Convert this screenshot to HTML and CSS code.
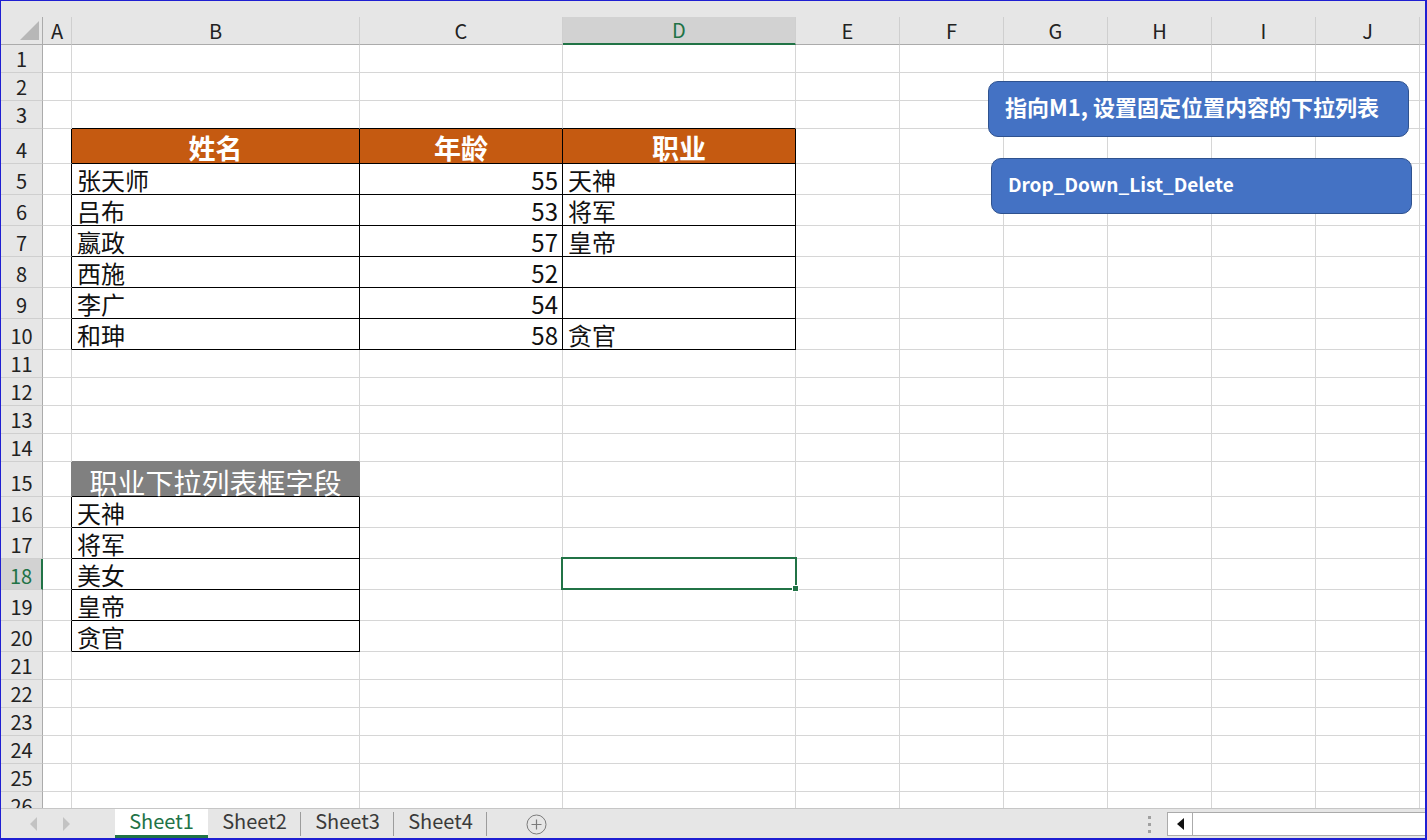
FILE: index.html
```html
<!DOCTYPE html>
<html lang="zh-CN">
<head>
<meta charset="utf-8">
<title>Sheet1</title>
<link rel="stylesheet" href="styles.css">
</head>
<body>
<div class="window">
  <div class="topband"></div>
  <div class="sheet">
    <div class="row hdr h28">
      <div class="corner"><svg width="19" height="19" viewBox="0 0 19 19"><polygon points="19,0 19,19 0,19" fill="#b7b7b7"/></svg></div>
      <div>A</div><div>B</div><div>C</div><div class="csel">D</div><div>E</div><div>F</div><div>G</div><div>H</div><div>I</div><div>J</div><div></div>
    </div>
    <div class="row h28"><div class="rh">1</div><div></div><div></div><div></div><div></div><div></div><div></div><div></div><div></div><div></div><div></div><div></div></div>
    <div class="row h28"><div class="rh">2</div><div></div><div></div><div></div><div></div><div></div><div></div><div></div><div></div><div></div><div></div><div></div></div>
    <div class="row h28"><div class="rh">3</div><div></div><div class="bb"></div><div class="bb"></div><div class="bb"></div><div></div><div></div><div></div><div></div><div></div><div></div><div></div></div>
    <div class="row h35"><div class="rh">4</div><div class="br"></div><div class="t oh">姓名</div><div class="t oh">年龄</div><div class="t oh">职业</div><div></div><div></div><div></div><div></div><div></div><div></div><div></div></div>
    <div class="row h31"><div class="rh">5</div><div class="br"></div><div class="t tx">张天师</div><div class="t tx num">55</div><div class="t tx">天神</div><div></div><div></div><div></div><div></div><div></div><div></div><div></div></div>
    <div class="row h31"><div class="rh">6</div><div class="br"></div><div class="t tx">吕布</div><div class="t tx num">53</div><div class="t tx">将军</div><div></div><div></div><div></div><div></div><div></div><div></div><div></div></div>
    <div class="row h31"><div class="rh">7</div><div class="br"></div><div class="t tx">嬴政</div><div class="t tx num">57</div><div class="t tx">皇帝</div><div></div><div></div><div></div><div></div><div></div><div></div><div></div></div>
    <div class="row h31"><div class="rh">8</div><div class="br"></div><div class="t tx">西施</div><div class="t tx num">52</div><div class="t tx"></div><div></div><div></div><div></div><div></div><div></div><div></div><div></div></div>
    <div class="row h31"><div class="rh">9</div><div class="br"></div><div class="t tx">李广</div><div class="t tx num">54</div><div class="t tx"></div><div></div><div></div><div></div><div></div><div></div><div></div><div></div></div>
    <div class="row h31"><div class="rh">10</div><div class="br"></div><div class="t tx">和珅</div><div class="t tx num">58</div><div class="t tx">贪官</div><div></div><div></div><div></div><div></div><div></div><div></div><div></div></div>
    <div class="row h28"><div class="rh">11</div><div></div><div></div><div></div><div></div><div></div><div></div><div></div><div></div><div></div><div></div><div></div></div>
    <div class="row h28"><div class="rh">12</div><div></div><div></div><div></div><div></div><div></div><div></div><div></div><div></div><div></div><div></div><div></div></div>
    <div class="row h28"><div class="rh">13</div><div></div><div></div><div></div><div></div><div></div><div></div><div></div><div></div><div></div><div></div><div></div></div>
    <div class="row h28"><div class="rh">14</div><div></div><div class="bbg"></div><div></div><div></div><div></div><div></div><div></div><div></div><div></div><div></div><div></div></div>
    <div class="row h35"><div class="rh">15</div><div class="brg"></div><div class="gh">职业下拉列表框字段</div><div></div><div></div><div></div><div></div><div></div><div></div><div></div><div></div><div></div></div>
    <div class="row h31"><div class="rh">16</div><div class="br"></div><div class="t tx">天神</div><div></div><div></div><div></div><div></div><div></div><div></div><div></div><div></div><div></div></div>
    <div class="row h31"><div class="rh">17</div><div class="br"></div><div class="t tx">将军</div><div></div><div></div><div></div><div></div><div></div><div></div><div></div><div></div><div></div></div>
    <div class="row h31"><div class="rh rsel">18</div><div class="br"></div><div class="t tx">美女</div><div></div><div></div><div></div><div></div><div></div><div></div><div></div><div></div><div></div></div>
    <div class="row h31"><div class="rh">19</div><div class="br"></div><div class="t tx">皇帝</div><div></div><div></div><div></div><div></div><div></div><div></div><div></div><div></div><div></div></div>
    <div class="row h31"><div class="rh">20</div><div class="br"></div><div class="t tx">贪官</div><div></div><div></div><div></div><div></div><div></div><div></div><div></div><div></div><div></div></div>
    <div class="row h28"><div class="rh">21</div><div></div><div></div><div></div><div></div><div></div><div></div><div></div><div></div><div></div><div></div><div></div></div>
    <div class="row h28"><div class="rh">22</div><div></div><div></div><div></div><div></div><div></div><div></div><div></div><div></div><div></div><div></div><div></div></div>
    <div class="row h28"><div class="rh">23</div><div></div><div></div><div></div><div></div><div></div><div></div><div></div><div></div><div></div><div></div><div></div></div>
    <div class="row h28"><div class="rh">24</div><div></div><div></div><div></div><div></div><div></div><div></div><div></div><div></div><div></div><div></div><div></div></div>
    <div class="row h28"><div class="rh">25</div><div></div><div></div><div></div><div></div><div></div><div></div><div></div><div></div><div></div><div></div><div></div></div>
    <div class="row h28"><div class="rh">26</div><div></div><div></div><div></div><div></div><div></div><div></div><div></div><div></div><div></div><div></div><div></div></div>

    <div class="selection"><span class="handle"></span></div>
    <div class="shape btn1">指向M1, 设置固定位置内容的下拉列表</div>
    <div class="shape btn2">Drop_Down_List_Delete</div>
  </div>
  <div class="tabbar">
    <div class="nav">
      <svg width="7" height="14" viewBox="0 0 7 14"><polygon points="7,0 7,14 0,7" fill="#c3c3c3"/></svg>
      <svg width="7" height="14" viewBox="0 0 7 14"><polygon points="0,0 0,14 7,7" fill="#c3c3c3"/></svg>
    </div>
    <div class="tab active">Sheet1</div>
    <div class="tab">Sheet2</div>
    <div class="tab">Sheet3</div>
    <div class="tab">Sheet4</div>
    <div class="addsheet"><svg width="21" height="21" viewBox="0 0 21 21"><circle cx="10.5" cy="10.5" r="9.5" fill="none" stroke="#7b7b7b" stroke-width="1"/><path d="M10.5 5.5v10M5.5 10.5h10" stroke="#7b7b7b" stroke-width="1.2"/></svg></div>
    <div class="rightgroup">
      <div class="splitter"><span></span><span></span><span></span></div>
      <div class="hscroll">
        <div class="arrowbtn"><svg width="7" height="12" viewBox="0 0 7 12"><polygon points="7,0 7,12 0,6" fill="#111"/></svg></div>
        <div class="track"></div>
      </div>
    </div>
  </div>
</div>
</body>
</html>
```
FILE: styles.css
```css
* { box-sizing: border-box; }
html, body { margin: 0; padding: 0; }
body {
  width: 1427px;
  height: 840px;
  overflow: hidden;
  background: #fff;
  font-family: "Noto Sans CJK SC", "Noto Sans", sans-serif;
  color: #111;
}
.window {
  width: 1427px;
  height: 840px;
  border-style: solid;
  border-color: #1f1fd2;
  border-width: 1px 2px 2px 1px;
  display: flex;
  flex-direction: column;
  overflow: hidden;
}
.topband { height: 16px; flex: none; background: #e6e6e6; }

.sheet {
  position: relative;
  flex: 1;
  min-height: 0;
  overflow: hidden;
  display: flex;
  flex-direction: column;
}
.row {
  flex: none;
  display: grid;
  grid-template-columns: 42px 29px 288px 203px 233px repeat(6, 104px) 1fr;
}
.h28 { height: 28px; }
.h31 { height: 31px; }
.h35 { height: 35px; }

.row > div {
  border-right: 1px solid #d6d6d6;
  border-bottom: 1px solid #d6d6d6;
  display: flex;
  align-items: flex-end;
  min-width: 0;
  white-space: nowrap;
}
.row > div:last-child { border-right: none; }

/* column headers */
.row.hdr > div {
  background: #e6e6e6;
  justify-content: center;
  font-size: 20px;
  line-height: 20px;
  padding-bottom: 3px;
  color: #222;
  border-bottom-color: #ababab;
  border-right-color: #cfcfcf;
}
.row.hdr > .corner {
  justify-content: flex-end;
  padding: 0 3px 4px 0;
  border-right-color: #ababab;
}
.row.hdr > .csel {
  background: #d2d2d2;
  color: #217346;
  border-bottom: 2px solid #217346;
}

/* row headers */
.row > .rh {
  background: #e6e6e6;
  justify-content: center;
  font-size: 20px;
  line-height: 20px;
  padding-bottom: 3px;
  color: #222;
  border-right-color: #ababab;
  border-bottom-color: #cfcfcf;
}
.row > .rsel {
  background: #d2d2d2;
  color: #217346;
  border-right: 2px solid #217346;
}

/* table borders */
.row > .bb { border-bottom-color: #000; }
.row > .br { border-right-color: #000; }
.row > .t { border-right-color: #000; border-bottom-color: #000; }
.row > .bbg { border-bottom-color: #808080; }
.row > .brg { border-right-color: #808080; }

.row > .tx {
  font-size: 24px;
  line-height: 24px;
  padding: 0 4px 2px 5px;
}
.row > .num { justify-content: flex-end; }

.row > .oh {
  background: #c55a11;
  color: #fff;
  font-weight: bold;
  font-size: 27px;
  line-height: 27px;
  justify-content: center;
  padding-bottom: 2px;
}
.row > .gh {
  background: #808080;
  border-right-color: #808080;
  border-bottom-color: #000;
  color: #fff;
  font-size: 28px;
  line-height: 28px;
  justify-content: center;
  padding-bottom: 0;
}

/* overlays */
.selection {
  position: absolute;
  left: 560px;
  top: 540px;
  width: 236px;
  height: 33px;
  border: 2px solid #217346;
}
.handle {
  position: absolute;
  left: 229px;
  top: 26px;
  width: 7px;
  height: 7px;
  background: #217346;
  border: 1px solid #fff;
}
.shape {
  position: absolute;
  width: 421px;
  height: 56px;
  background: #4472c4;
  border: 1.5px solid #2f528f;
  border-radius: 10px;
  color: #fff;
  font-weight: bold;
  display: flex;
  align-items: center;
  padding-left: 16px;
  padding-bottom: 6px;
  white-space: nowrap;
}
.btn1 { left: 987px; top: 64px; font-size: 22px; }
.btn2 { left: 990px; top: 141px; font-size: 19px; }

/* sheet tabs */
.tabbar {
  flex: none;
  height: 30px;
  background: #e6e6e6;
  border-top: 1px solid #c6c6c6;
  display: flex;
  align-items: flex-start;
}
.nav {
  width: 114px;
  height: 29px;
  display: flex;
  align-items: center;
  gap: 26px;
  padding-left: 29px;
}
.tab {
  position: relative;
  width: 93px;
  height: 29px;
  display: flex;
  justify-content: center;
  font-size: 20px;
  line-height: 20px;
  padding-top: 2px;
  color: #3a3a3a;
}
.tab::after {
  content: "";
  position: absolute;
  right: 0;
  top: 3px;
  bottom: 2px;
  width: 1px;
  background: #9c9c9c;
}
.tab.active {
  background: #fff;
  color: #217346;
  border-bottom: 3px solid #217346;
}
.tab.active::after { display: none; }
.addsheet {
  margin-left: 39px;
  margin-top: 5px;
  height: 21px;
  display: flex;
}
.rightgroup {
  margin-left: auto;
  display: flex;
  align-items: flex-start;
  gap: 16px;
}
.splitter {
  margin-top: 7px;
  display: flex;
  flex-direction: column;
  gap: 4px;
}
.splitter span {
  width: 3px;
  height: 3px;
  background: #a0a0a0;
}
.hscroll {
  margin-top: 3px;
  width: 258px;
  height: 24px;
  background: #fff;
  border: 1px solid #ababab;
  border-right: none;
  display: flex;
}
.arrowbtn {
  width: 25px;
  height: 100%;
  border-right: 1px solid #ababab;
  display: flex;
  align-items: center;
  justify-content: center;
}
.track { flex: 1; }
```
